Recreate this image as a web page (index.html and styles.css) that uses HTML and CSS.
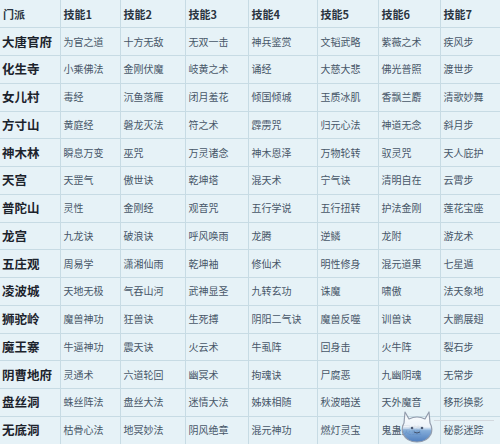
FILE: index.html
```html
<!DOCTYPE html>
<html lang="zh-CN">
<head>
<meta charset="utf-8">
<title>门派技能</title>
<link rel="stylesheet" href="styles.css">
</head>
<body>
<div class="wrap">
<table class="skills">
<colgroup>
<col class="c0"><col class="c1"><col class="c2"><col class="c3"><col class="c4"><col class="c5"><col class="c6"><col class="c7">
</colgroup>
<thead>
<tr><th>门派</th><th>技能1</th><th>技能2</th><th>技能3</th><th>技能4</th><th>技能5</th><th>技能6</th><th>技能7</th></tr>
</thead>
<tbody>
<tr><th>大唐官府</th><td>为官之道</td><td>十方无敌</td><td>无双一击</td><td>神兵鉴赏</td><td>文韬武略</td><td>紫薇之术</td><td>疾风步</td></tr>
<tr><th>化生寺</th><td>小乘佛法</td><td>金刚伏魔</td><td>岐黄之术</td><td>诵经</td><td>大慈大悲</td><td>佛光普照</td><td>渡世步</td></tr>
<tr><th>女儿村</th><td>毒经</td><td>沉鱼落雁</td><td>闭月羞花</td><td>倾国倾城</td><td>玉质冰肌</td><td>香飘兰麝</td><td>清歌妙舞</td></tr>
<tr><th>方寸山</th><td>黄庭经</td><td>磐龙灭法</td><td>符之术</td><td>霹雳咒</td><td>归元心法</td><td>神道无念</td><td>斜月步</td></tr>
<tr><th>神木林</th><td>瞬息万变</td><td>巫咒</td><td>万灵诸念</td><td>神木恩泽</td><td>万物轮转</td><td>驭灵咒</td><td>天人庇护</td></tr>
<tr><th>天宫</th><td>天罡气</td><td>傲世诀</td><td>乾坤塔</td><td>混天术</td><td>宁气诀</td><td>清明自在</td><td>云霄步</td></tr>
<tr><th>普陀山</th><td>灵性</td><td>金刚经</td><td>观音咒</td><td>五行学说</td><td>五行扭转</td><td>护法金刚</td><td>莲花宝座</td></tr>
<tr><th>龙宫</th><td>九龙诀</td><td>破浪诀</td><td>呼风唤雨</td><td>龙腾</td><td>逆鳞</td><td>龙附</td><td>游龙术</td></tr>
<tr><th>五庄观</th><td>周易学</td><td>潇湘仙雨</td><td>乾坤袖</td><td>修仙术</td><td>明性修身</td><td>混元道果</td><td>七星遁</td></tr>
<tr><th>凌波城</th><td>天地无极</td><td>气吞山河</td><td>武神显圣</td><td>九转玄功</td><td>诛魔</td><td>啸傲</td><td>法天象地</td></tr>
<tr><th>狮驼岭</th><td>魔兽神功</td><td>狂兽诀</td><td>生死搏</td><td>阴阳二气诀</td><td>魔兽反噬</td><td>训兽诀</td><td>大鹏展翅</td></tr>
<tr><th>魔王寨</th><td>牛逼神功</td><td>震天诀</td><td>火云术</td><td>牛虱阵</td><td>回身击</td><td>火牛阵</td><td>裂石步</td></tr>
<tr><th>阴曹地府</th><td>灵通术</td><td>六道轮回</td><td>幽冥术</td><td>拘魂诀</td><td>尸腐恶</td><td>九幽阴魂</td><td>无常步</td></tr>
<tr><th>盘丝洞</th><td>蛛丝阵法</td><td>盘丝大法</td><td>迷情大法</td><td>姊妹相随</td><td>秋波暗送</td><td>天外魔音</td><td>移形换影</td></tr>
<tr><th>无底洞</th><td>枯骨心法</td><td>地冥妙法</td><td>阴风绝章</td><td>混元神功</td><td>燃灯灵宝</td><td>鬼蛊灵蕴</td><td>秘影迷踪</td></tr>
</tbody>
</table>
<svg class="mark" width="34" height="36" viewBox="0 0 34 36" aria-hidden="true">
<defs>
<linearGradient id="g" x1="0" y1="0" x2="0" y2="1">
<stop offset="0" stop-color="#ffffff"/>
<stop offset="0.5" stop-color="#eef4fa"/>
<stop offset="0.62" stop-color="#7aa6d6"/>
<stop offset="1" stop-color="#3f72b8"/>
</linearGradient>
</defs>
<path d="M5 4 L9 11 Q17 7 25 11 L29 4 L30 15 Q33 20 31 26 Q27 34 17 34 Q7 34 3 26 Q1 20 4 15 Z" fill="url(#g)" stroke="#8a94a6" stroke-width="1.2" stroke-linejoin="round"/>
<circle cx="12" cy="20" r="1.3" fill="#3a4a66"/>
<circle cx="22" cy="20" r="1.3" fill="#3a4a66"/>
<path d="M14 24 Q17 26 20 24" fill="none" stroke="#3a4a66" stroke-width="1"/>
</svg>
<div class="mark-line"></div>
</div>
</body>
</html>
```

FILE: styles.css
```css
html, body {
  margin: 0;
  padding: 0;
  background: #e4f0f5;
}
.wrap {
  position: relative;
  width: 500px;
  height: 444px;
  overflow: hidden;
}
.skills {
  width: 500px;
  table-layout: fixed;
  border-collapse: collapse;
  font-family: "Noto Sans CJK SC", "Noto Sans", sans-serif;
  background: #e6f2f7;
}
.c0 { width: 60px; }
.c1 { width: 60px; }
.c2 { width: 65px; }
.c3 { width: 63px; }
.c4 { width: 69px; }
.c5 { width: 61px; }
.c6 { width: 62px; }
.c7 { width: 60px; }
.skills tr { height: 27.75px; }
.skills th,
.skills td {
  border: 1px solid #c7dbe4;
  padding: 0 0 0 3px;
  text-align: left;
  white-space: nowrap;
  overflow: hidden;
  line-height: 14px;
}
.skills thead th {
  font-size: 11px;
  font-weight: bold;
  color: #2a3440;
}
.skills tbody th {
  font-size: 12.5px;
  font-weight: bold;
  color: #1c232c;
  padding-left: 2px;
}
.skills td {
  font-size: 10px;
  color: #465668;
}
.skills tr > :first-child { border-left: none; }
.skills tr > :last-child { border-right: none; }
.skills thead tr > * { border-top: none; }
.mark {
  position: absolute;
  left: 400px;
  top: 408px;
  opacity: 0.9;
}
.mark-line {
  position: absolute;
  left: 434px;
  top: 420px;
  width: 60px;
  height: 1px;
  background: #d2d8de;
}
```
